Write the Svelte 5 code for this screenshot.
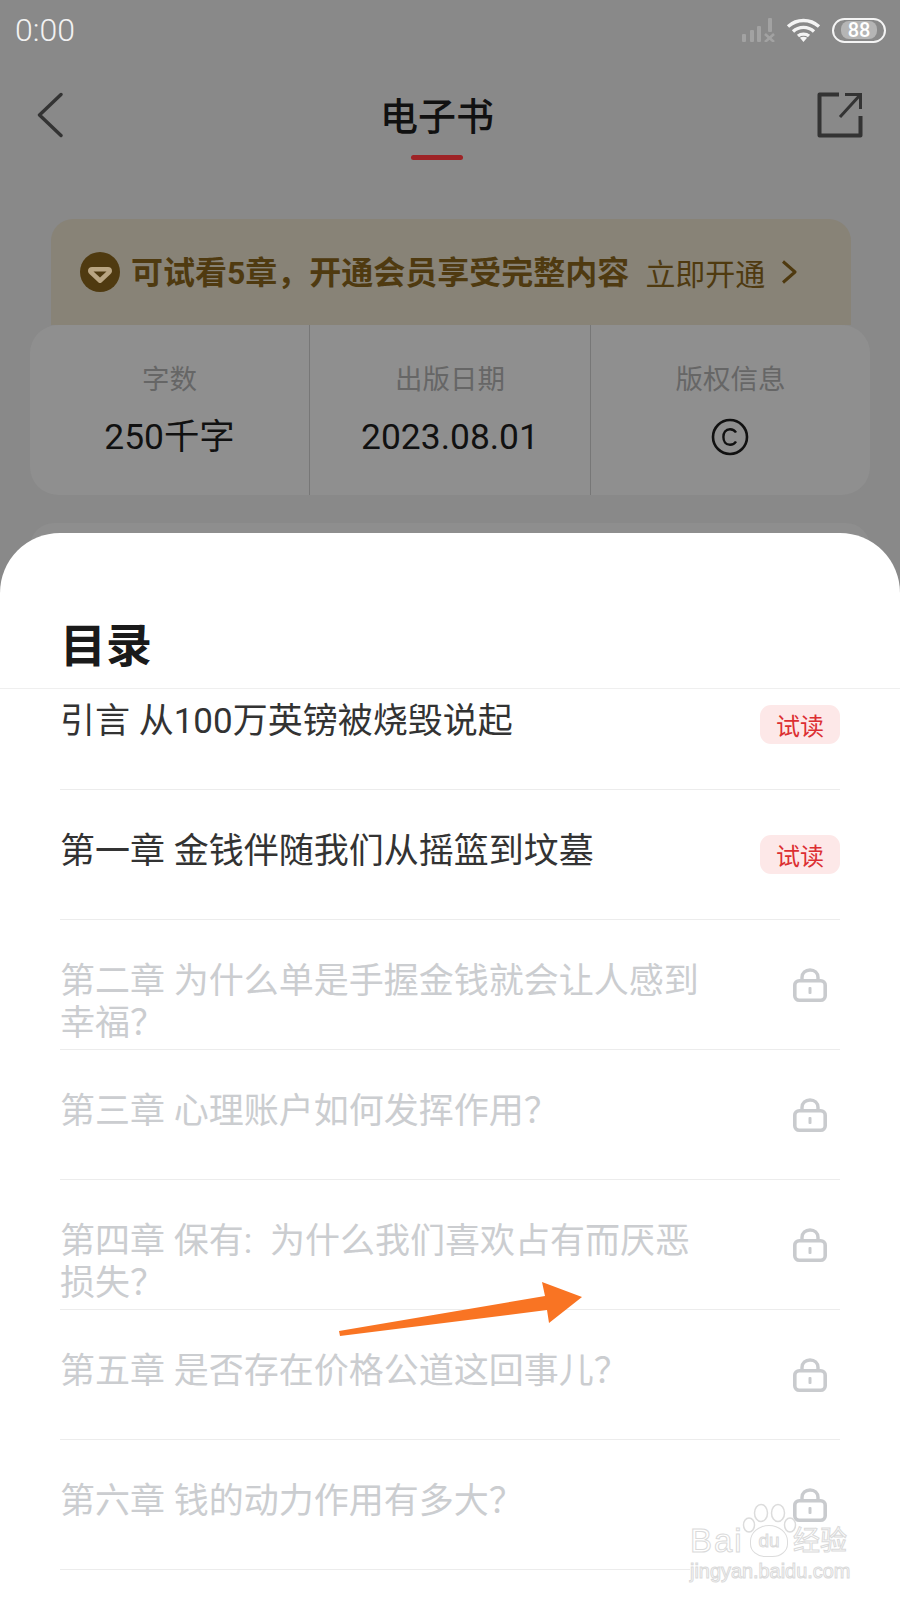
<script>
  const stats = [
    { label: '字数', value: '250千字' },
    { label: '出版日期', value: '2023.08.01' },
    { label: '版权信息', value: null },
  ];

  const chapters = [
    { title: '引言 从100万英镑被烧毁说起', free: true },
    { title: '第一章 金钱伴随我们从摇篮到坟墓', free: true },
    { title: '第二章 为什么单是手握金钱就会让人感到幸福？', free: false },
    { title: '第三章 心理账户如何发挥作用？', free: false },
    { title: '第四章 保有:\u2002为什么我们喜欢占有而厌恶损失？', free: false },
    { title: '第五章 是否存在价格公道这回事儿？', free: false },
    { title: '第六章 钱的动力作用有多大？', free: false },
  ];
</script>

<div class="page">
  <div class="status">
    <span class="time">0:00</span>
    <div class="status-icons">
      <svg class="signal" width="33" height="24" viewBox="0 0 33 24">
        <g fill="#a2a2a2">
          <rect x="0" y="16" width="4" height="8" rx="1" />
          <rect x="8" y="12" width="4" height="12" rx="1" />
          <rect x="15" y="8" width="4" height="16" rx="1" />
          <rect x="26" y="0" width="4" height="14" rx="1" />
        </g>
        <path d="M23 16l9 8M32 16l-9 8" stroke="#a2a2a2" stroke-width="2.6" />
      </svg>
      <svg class="wifi" width="35" height="24" viewBox="0 0 35 24">
        <g fill="none" stroke="#f4f4f4" stroke-width="3.4">
          <path d="M2 8.5C11 .5 24 .5 33 8.5" />
          <path d="M7 13.5C13 8 22 8 28 13.5" />
          <path d="M12 18C15 15.5 20 15.5 23 18" />
        </g>
        <path d="M17.5 24l-3.6-4.2c2-1.3 5.2-1.3 7.2 0z" fill="#f4f4f4" />
      </svg>
      <div class="battery"><span>88</span></div>
    </div>
  </div>

  <header class="nav">
    <svg class="back" width="26" height="46" viewBox="0 0 26 46">
      <path d="M24 2.5L2.5 23L24 43.5" fill="none" stroke="#333" stroke-width="3.4" stroke-linecap="round" stroke-linejoin="round" />
    </svg>
    <div class="nav-title">
      <h1>电子书</h1>
      <i></i>
    </div>
    <svg class="share" width="46" height="46" viewBox="0 0 46 46">
      <path d="M22 2.5H2.5V43.5H43.5V24" fill="none" stroke="#333" stroke-width="4" stroke-linejoin="round" />
      <path d="M23 25L43.5 2.5M28 2.5H43.5V17" fill="none" stroke="#333" stroke-width="3" />
    </svg>
  </header>

  <div class="promo">
    <svg width="40" height="40" viewBox="0 0 40 40">
      <circle cx="20" cy="20" r="20" fill="#4f3a10" />
      <path d="M8 19C8 16.5 9.5 15 12 15H28C30.5 15 32 16.5 32 19C32 20.5 31 21.5 30 22.5L21.5 30.5C20.5 31.3 19.5 31.3 18.500 30.500L10 22.500C9 21.500 8 20.500 8 19Z" fill="#b9a582" />
      <path d="M13.5 19.5H26.5L20 25.5Z" fill="#4f3a10" />
    </svg>
    <strong>可试看5章，开通会员享受完整内容</strong>
    <span>立即开通</span>
    <svg width="16" height="24" viewBox="0 0 16 24">
      <path d="M2 1.5L14 12L2 22.5" fill="none" stroke="#4f3a10" stroke-width="3" stroke-linejoin="round" />
    </svg>
  </div>

  <div class="stats">
    {#each stats as stat}
      <div class="stat">
        <span class="stat-label">{stat.label}</span>
        {#if stat.value}
          <span class="stat-value">{stat.value}</span>
        {:else}
          <svg class="copyright" width="38" height="38" viewBox="0 0 38 38">
            <circle cx="19" cy="19" r="17" fill="none" stroke="#111" stroke-width="2.6" />
            <path d="M25 14.5C23.6 12.2 21.5 11.2 19 11.2C14.6 11.2 12.4 14.8 12.4 19C12.4 23.2 14.6 26.8 19 26.8C21.5 26.8 23.6 25.8 25 23.5" fill="none" stroke="#111" stroke-width="2.4" />
          </svg>
        {/if}
      </div>
    {/each}
  </div>

  <div class="next-card"></div>

  <section class="sheet">
    <h2>目录</h2>
    <div class="list">
      {#each chapters as chapter}
        <div class="row" class:locked={!chapter.free}>
          <p>{chapter.title}</p>
          {#if chapter.free}
            <span class="badge">试读</span>
          {:else}
            <svg class="lock" width="34" height="34" viewBox="0 0 34 34">
              <path d="M9 13V9.5C9 5 12.5 2 17 2C21.5 2 25 5 25 9.5V13" fill="none" stroke="#c9cbce" stroke-width="3.4" />
              <rect x="1.8" y="12.8" width="30.4" height="19.4" rx="4.5" fill="none" stroke="#c9cbce" stroke-width="3.6" />
              <rect x="15.5" y="19" width="3" height="7" rx="1" fill="#c9cbce" />
            </svg>
          {/if}
        </div>
      {/each}
    </div>
  </section>

  <svg class="arrow" width="900" height="1600" viewBox="0 0 900 1600">
    <path d="M339 1331L545 1296L542 1282L582 1297L549 1323L547 1310L340 1336Z" fill="#f97423" />
  </svg>

  <div class="watermark">
    <svg class="paw" width="56" height="34" viewBox="0 0 56 34">
      <g fill="none" stroke="#dcdcdc" stroke-width="1.5">
        <ellipse cx="19" cy="10" rx="6.5" ry="8.5" />
        <ellipse cx="36" cy="10" rx="6.5" ry="8.5" />
        <ellipse cx="7" cy="22" rx="5.5" ry="7" />
        <ellipse cx="48" cy="22" rx="5.5" ry="7" />
      </g>
    </svg>
    <div class="mark-main"><span>Bai</span><b>du</b><span>经验</span></div>
    <div class="mark-url">jingyan.baidu.com</div>
  </div>
</div>

<style>
  :global(body) {
    margin: 0;
    background: #888;
  }

  .page {
    position: relative;
    display: flex;
    flex-direction: column;
    width: 900px;
    height: 1600px;
    overflow: hidden;
    background: #898989;
    font-family: Roboto, "Noto Sans CJK SC", sans-serif;
  }

  .status {
    display: flex;
    align-items: center;
    justify-content: space-between;
    height: 60px;
    padding: 0 14px 0 15px;
  }

  .time {
    color: #f2f2f2;
    font-size: 32px;
    font-weight: 300;
    line-height: 62px;
  }

  .status-icons {
    display: flex;
    align-items: center;
    gap: 11px;
  }

  .battery {
    display: flex;
    align-items: center;
    justify-content: center;
    box-sizing: border-box;
    width: 54px;
    height: 25px;
    border: 2.5px solid #f4f4f4;
    border-radius: 13px;
  }

  .battery span {
    padding: 0 7px;
    border-radius: 8px;
    background: #b5b5b5;
    color: #fff;
    font-size: 20px;
    font-weight: 500;
    line-height: 18px;
  }

  .nav {
    display: flex;
    align-items: flex-start;
    justify-content: space-between;
    height: 159px;
    padding: 32px 37px 0;
    box-sizing: border-box;
  }

  .nav-title {
    display: flex;
    flex-direction: column;
    align-items: center;
    margin-left: -6px;
  }

  h1 {
    margin: 2px 0 0;
    color: #111;
    font-size: 38px;
    font-weight: 500;
    line-height: 46px;
  }

  .nav-title i {
    width: 52px;
    height: 5px;
    margin-top: 15px;
    border-radius: 3px;
    background: #9e2326;
  }

  .promo {
    display: flex;
    align-items: center;
    box-sizing: border-box;
    height: 106px;
    margin: 0 49px 0 51px;
    padding: 0 0 0 29px;
    border-radius: 22px 22px 0 0;
    background: #888377;
    color: #4f3a10;
  }

  .promo strong {
    margin: 0 0 4px 11px;
    font-size: 32px;
    font-weight: 700;
  }

  .promo span {
    margin: 0 16px 0 16px;
    font-size: 30px;
  }

  .stats {
    display: grid;
    grid-template-columns: 279px 281px 280px;
    height: 170px;
    margin: 0 30px;
    border-radius: 28px;
    background: #8f8f8f;
  }

  .stat {
    display: flex;
    flex-direction: column;
    align-items: center;
    padding-top: 35px;
    box-sizing: border-box;
    border-left: 1.5px solid #777;
  }

  .stat:first-child {
    border-left: 0;
  }

  .stat-label {
    color: #666;
    font-size: 27.5px;
    line-height: 40px;
  }

  .stat-value {
    margin-top: 17px;
    color: #111;
    font-size: 35.4px;
    line-height: 40px;
  }

  .copyright {
    margin: 18px 2px 0 0;
  }

  .next-card {
    flex: 1;
    margin: 28px 30px 0;
    border-radius: 24px;
    background: #8e8e8e;
  }

  .sheet {
    position: absolute;
    top: 533px;
    left: 0;
    width: 900px;
    height: 1067px;
    overflow: hidden;
    border-radius: 60px 60px 0 0;
    background: #fff;
  }

  h2 {
    box-sizing: border-box;
    height: 156px;
    margin: 0;
    padding: 82px 0 0 60px;
    border-bottom: 1.5px solid #efefef;
    color: #1a1a1a;
    font-size: 46px;
    font-weight: 700;
    line-height: 62px;
  }

  .list {
    height: 911px;
    overflow: hidden;
  }

  .row {
    display: flex;
    align-items: flex-start;
    justify-content: space-between;
    box-sizing: border-box;
    height: 130px;
    margin: 0 60px;
    padding-top: 41px;
    border-bottom: 1.5px solid #ececec;
  }

  .row:first-child {
    margin-top: -29px;
  }

  .row p {
    width: 650px;
    margin: 0;
    color: #333;
    font-size: 35px;
    line-height: 42px;
  }

  .row.locked p {
    color: #cbcdd0;
  }

  .badge {
    display: flex;
    align-items: center;
    justify-content: center;
    width: 80px;
    height: 39px;
    margin-top: 4px;
    border-radius: 11px;
    background: #fde8e8;
    color: #dc2f32;
    font-size: 24px;
  }

  .lock {
    margin: 7px 13px 0 0;
  }

  .arrow {
    position: absolute;
    top: 0;
    left: 0;
    pointer-events: none;
  }

  .watermark {
    position: absolute;
    top: 1503px;
    left: 690px;
    width: 158px;
    color: #fff;
    -webkit-text-stroke: 1px #dadada;
    font-family: "Liberation Sans", "Noto Sans CJK SC", sans-serif;
  }

  .paw {
    position: absolute;
    top: 0;
    left: 52px;
  }

  .mark-main {
    display: flex;
    align-items: center;
    height: 32px;
    margin-top: 22px;
    font-size: 33px;
    line-height: 32px;
    white-space: nowrap;
  }

  .mark-main span:first-child {
    width: 60px;
    letter-spacing: 2px;
  }

  .mark-main b {
    display: flex;
    align-items: center;
    justify-content: center;
    box-sizing: border-box;
    width: 38px;
    height: 32px;
    border: 1.5px solid #dcdcdc;
    border-radius: 55% 55% 45% 45%;
    font-size: 19px;
    font-weight: 400;
  }

  .mark-main span:last-child {
    margin-left: 5px;
    font-size: 27px;
  }

  .mark-url {
    margin-top: 3px;
    background: #fff;
    font-size: 19.9px;
    line-height: 22px;
    white-space: nowrap;
  }
</style>
